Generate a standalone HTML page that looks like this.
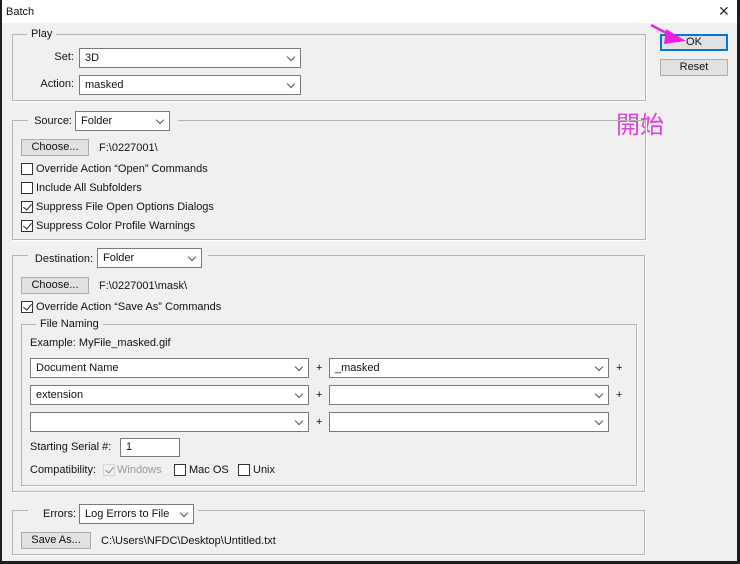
<!DOCTYPE html>
<html><head><meta charset="utf-8"><style>
*{box-sizing:border-box;margin:0;padding:0}
body{width:740px;height:564px;overflow:hidden;background:#1e1e1e;font-family:"Liberation Sans",Arial,sans-serif;font-size:11px;color:#111;position:relative}
#win{position:absolute;left:2px;top:0;width:735px;height:561px;background:#f0f0f0}
#tb{position:absolute;left:0;top:0;width:735px;height:23px;background:#fff}
.a{position:absolute;white-space:nowrap}
.g{position:absolute;border:1px solid #b4b4b4;box-shadow:1px 1px 0 #fff}
.lbl{position:absolute;background:#f0f0f0;padding:0 4px;top:-8px;line-height:14px}
.sel{position:absolute;background:#fff;border:1px solid #7a7a7a;height:20px;line-height:18px;padding-left:5px}
.sel:after{content:"";position:absolute;right:6px;top:5px;width:5px;height:5px;border-right:1px solid #555;border-bottom:1px solid #555;transform:rotate(45deg)}
.btn{position:absolute;background:#e1e1e1;border:1px solid #adadad;height:17px;line-height:15px;text-align:center}
.cb{position:absolute;width:12px;height:12px;border:1px solid #333;background:#fff}
.cb.on:after{content:"";position:absolute;left:3px;top:0px;width:4px;height:7px;border-right:1.5px solid #222;border-bottom:1.5px solid #222;transform:rotate(40deg)}
.t{position:absolute;white-space:nowrap;line-height:14px}
.r{text-align:right}
</style></head><body>
<div id="win">
<div id="tb"></div>
<div class="t" style="left:4px;top:5px">Batch</div>
<div class="t" style="left:716px;top:4px;font-size:14px;color:#333">✕</div>

<div class="g" style="left:10px;top:34px;width:634px;height:67px"><div class="lbl" style="left:14px">Play</div></div>
<div class="t r" style="left:2px;width:70px;top:50px">Set:</div>
<div class="sel" style="left:77px;top:48px;width:222px">3D</div>
<div class="t r" style="left:2px;width:70px;top:77px">Action:</div>
<div class="sel" style="left:77px;top:75px;width:222px">masked</div>

<div class="btn" style="left:658px;top:34px;width:68px;border:2px solid #0078d7;line-height:13px">OK</div>
<div class="btn" style="left:658px;top:59px;width:68px">Reset</div>
<div class="t" style="left:614px;top:112px;font-size:24px;line-height:28px;color:#e040e0;font-family:'Liberation Sans','Noto Sans CJK TC',sans-serif">開始</div>

<div class="g" style="left:10px;top:120px;width:634px;height:120px"></div>
<div class="a" style="left:26px;top:111px;width:150px;height:20px;background:#f0f0f0"></div>
<div class="t r" style="left:2px;width:68px;top:114px">Source:</div>
<div class="sel" style="left:73px;top:111px;width:95px">Folder</div>
<div class="btn" style="left:19px;top:139px;width:68px">Choose...</div>
<div class="t" style="left:97px;top:141px">F:\0227001\</div>
<div class="cb" style="left:19px;top:163px"></div><div class="t" style="left:34px;top:162px">Override Action “Open” Commands</div>
<div class="cb" style="left:19px;top:182px"></div><div class="t" style="left:34px;top:181px">Include All Subfolders</div>
<div class="cb on" style="left:19px;top:201px"></div><div class="t" style="left:34px;top:200px">Suppress File Open Options Dialogs</div>
<div class="cb on" style="left:19px;top:220px"></div><div class="t" style="left:34px;top:219px">Suppress Color Profile Warnings</div>

<div class="g" style="left:10px;top:255px;width:633px;height:237px"></div>
<div class="a" style="left:26px;top:248px;width:180px;height:20px;background:#f0f0f0"></div>
<div class="t r" style="left:2px;width:89px;top:252px">Destination:</div>
<div class="sel" style="left:95px;top:248px;width:105px">Folder</div>
<div class="btn" style="left:19px;top:277px;width:68px">Choose...</div>
<div class="t" style="left:97px;top:279px">F:\0227001\mask\</div>
<div class="cb on" style="left:19px;top:301px"></div><div class="t" style="left:34px;top:300px">Override Action “Save As” Commands</div>

<div class="g" style="left:19px;top:324px;width:616px;height:162px"><div class="lbl" style="left:14px">File Naming</div></div>
<div class="t" style="left:28px;top:336px">Example: MyFile_masked.gif</div>
<div class="sel" style="left:28px;top:358px;width:279px">Document Name</div>
<div class="t" style="left:314px;top:361px">+</div>
<div class="sel" style="left:327px;top:358px;width:280px">_masked</div>
<div class="t" style="left:614px;top:361px">+</div>
<div class="sel" style="left:28px;top:385px;width:279px">extension</div>
<div class="t" style="left:314px;top:388px">+</div>
<div class="sel" style="left:327px;top:385px;width:280px"></div>
<div class="t" style="left:614px;top:388px">+</div>
<div class="sel" style="left:28px;top:412px;width:279px"></div>
<div class="t" style="left:314px;top:415px">+</div>
<div class="sel" style="left:327px;top:412px;width:280px"></div>
<div class="t" style="left:28px;top:440px">Starting Serial #:</div>
<div class="a" style="left:118px;top:438px;width:60px;height:19px;background:#fff;border:1px solid #7a7a7a;padding-left:5px;line-height:17px">1</div>
<div class="t" style="left:28px;top:463px">Compatibility:</div>
<div class="cb on" style="left:101px;top:464px;border-color:#bbb;background:transparent;opacity:.5"></div>
<div class="t" style="left:115px;top:463px;color:#999">Windows</div>
<div class="cb" style="left:172px;top:464px"></div><div class="t" style="left:187px;top:463px">Mac OS</div>
<div class="cb" style="left:236px;top:464px"></div><div class="t" style="left:251px;top:463px">Unix</div>

<div class="g" style="left:10px;top:510px;width:633px;height:45px"></div>
<div class="a" style="left:26px;top:503px;width:170px;height:20px;background:#f0f0f0"></div>
<div class="t r" style="left:2px;width:72px;top:507px">Errors:</div>
<div class="sel" style="left:77px;top:504px;width:115px">Log Errors to File</div>
<div class="btn" style="left:19px;top:532px;width:70px">Save As...</div>
<div class="t" style="left:99px;top:534px">C:\Users\NFDC\Desktop\Untitled.txt</div>
</div>
<svg class="a" style="left:0;top:0" width="740" height="564"><line x1="651" y1="25" x2="672" y2="36" stroke="#f020e0" stroke-width="2.5"/><polygon points="666,29 686,41 664,44" fill="#f020e0"/></svg>
</body></html>
